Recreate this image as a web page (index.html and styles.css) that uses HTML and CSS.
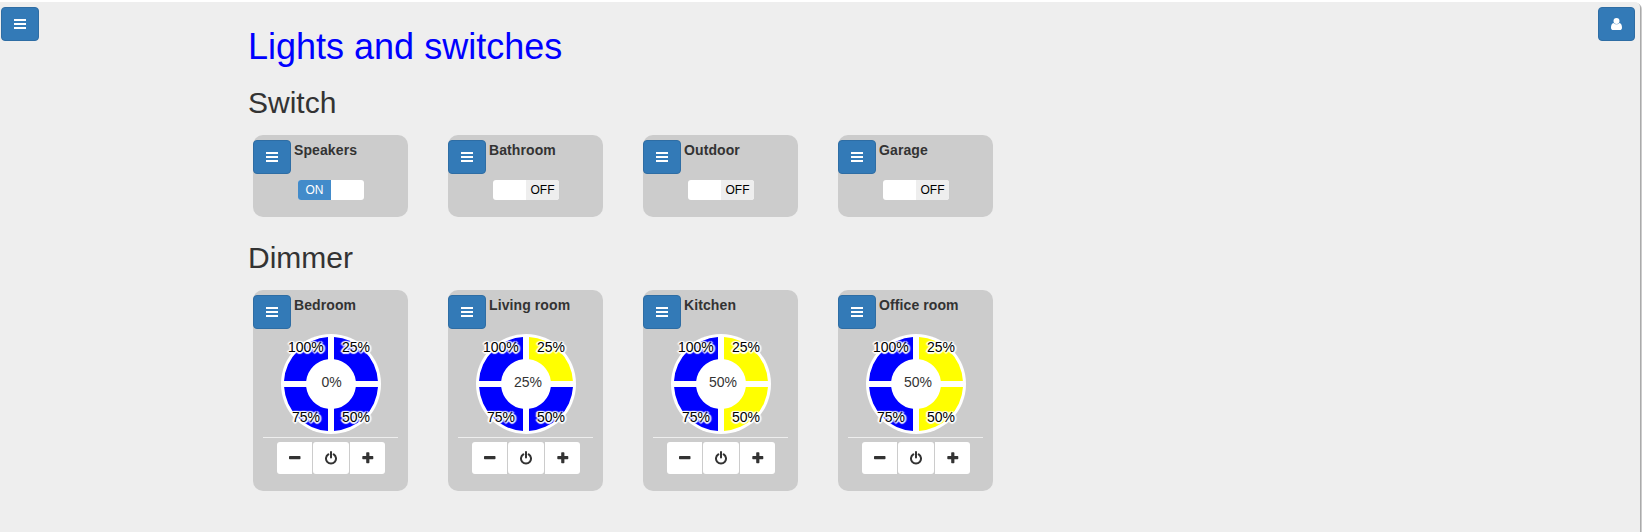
FILE: index.html
```html
<!DOCTYPE html>
<html lang="en">
<head>
<meta charset="utf-8">
<title>Lights and switches</title>
<link rel="stylesheet" href="styles.css">
</head>
<body>
<svg class="defs" aria-hidden="true">
  <symbol id="bars" viewBox="0 0 12 10"><path d="M0 0h12v2H0zM0 4h12v2H0zM0 8h12v2H0z"/></symbol>
  <symbol id="user" viewBox="0 0 11 12"><circle cx="5.5" cy="3" r="3"/><path d="M2.600 5C.8 5.200 0 7.300 0 9.700 0 11.200 1 12 2.300 12h6.400C10 12 11 11.200 11 9.700 11 7.300 10.200 5.200 8.400 5 7.600 5.800 6.600 6.300 5.500 6.300S3.400 5.800 2.600 5z"/></symbol>
  <symbol id="minus" viewBox="0 0 12 12"><rect x="0" y="4" width="11.500" height="3.200" rx=".7"/></symbol>
  <symbol id="plus" viewBox="0 0 12 12"><path d="M4.900.2h1.800q.7 0 .7.700v3.200h3.200q.7 0 .7.700v1.800q0 .7-.7.700H7.400v3.200q0 .7-.7.700H4.900q-.7 0-.7-.7V7.300H1q-.7 0-.7-.7V4.800q0-.7.700-.7h3.200V.9q0-.7.700-.7z"/></symbol>
  <symbol id="power" viewBox="0 0 12 14"><path d="M3.300 3.400a5 5 0 1 0 5.400 0M6 1v5.500" fill="none" stroke="currentColor" stroke-width="2" stroke-linecap="round"/></symbol>
  <symbol id="quarter" viewBox="0 0 44 44"><path d="M0 0A47 47 0 0 1 43.900 44H21.800A25 25 0 0 0 0 22.200z"/></symbol>
</svg>
<div class="page">
  <header class="topbar">
    <button class="btn"><svg class="bars"><use href="#bars"/></svg></button>
    <button class="btn btn-user"><svg class="user"><use href="#user"/></svg></button>
  </header>
  <main class="content">
    <h1>Lights and switches</h1>
    <h2>Switch</h2>
    <div class="row" id="switches"></div>
    <h2 class="next">Dimmer</h2>
    <div class="row" id="dimmers"></div>
  </main>
</div>
<script src="app.js"></script>
</body>
</html>
```
FILE: styles.css
```css
* { box-sizing: border-box; }
body {
  margin: 0;
  height: 532px;
  overflow: hidden;
  padding-top: 2px;
  background: #fff;
  color: #333;
  font: 14px/20px "Liberation Sans", Arial, sans-serif;
}
.defs { display: none; }
svg { display: block; fill: currentColor; }
.page {
  width: 1640px;
  height: 530px;
  background: #eee;
  border-top-right-radius: 5px;
  box-shadow: 1px 1px 0 #aaa, 2px 2px 0 #ccc;
  clip-path: inset(0 -5px 0 0);
}
.topbar {
  display: flex;
  justify-content: space-between;
  height: 39px;
  padding: 5px 5px 0 1px;
}
.btn {
  display: flex;
  align-items: center;
  justify-content: center;
  flex: none;
  width: 38px;
  height: 34px;
  padding: 0;
  border: 1px solid #2e6da4;
  border-radius: 4px;
  background: #337ab7;
  color: #fff;
}
.btn-user { width: 37px; }
.bars { width: 12px; height: 10px; }
.user { width: 11px; height: 12px; }
.content { padding: 0 0 0 248px; margin-top: -14px; }
h1, h2 { margin: 0; font-weight: 400; }
h1 { font-size: 36px; line-height: 40px; color: #00f; }
h2 { font-size: 30px; line-height: 33px; margin-top: 19px; }
h2.next { margin-top: 24px; }
.row { display: flex; gap: 40px; padding-left: 5px; margin-top: 16px; }
.card {
  width: 155px;
  height: 82px;
  border-radius: 10px;
  background: #ccc;
  padding-top: 5px;
}
.card-tall { height: 201px; }
.head { display: flex; height: 34px; gap: 3px; font-weight: 700; letter-spacing: .1px; }
.toggle {
  display: flex;
  width: 66px;
  height: 20px;
  margin: 6px 0 0 45px;
  border-radius: 3px;
  overflow: hidden;
  background: #fff;
  font-size: 12px;
  text-align: center;
}
.toggle span { width: 33px; }
.on { background: #428bca; color: #fff; }
.off { background: #eee; color: #000; margin-left: 33px; }
.dial {
  position: relative;
  display: grid;
  grid-template: 44px 44px / 44px 44px;
  gap: 6px;
  width: 100px;
  height: 100px;
  margin: 5px auto 0 28px;
  padding: 3px;
  border-radius: 50%;
  background: #fff;
  color: #000;
}
.arc { width: 44px; height: 44px; fill: #00f; }
.lit { fill: #ff0; }
.tl { transform: rotate(-90deg); }
.br { transform: rotate(90deg); }
.bl { transform: rotate(180deg); }
.mark {
  position: absolute;
  text-shadow: 1px 1px 1px #fff, -1px 1px 1px #fff, 1px -1px 1px #fff, -1px -1px 1px #fff, 2px 0 1px #fff, -2px 0 1px #fff, 0 2px 1px #fff;
}
.mark-100 { left: 7px; top: 3px; }
.mark-25 { left: 61px; top: 3px; }
.mark-75 { left: 11px; top: 73px; }
.mark-50 { left: 61px; top: 73px; }
.level { position: absolute; left: 38px; top: 38px; width: 25px; text-align: center; color: #333; }
.rule { height: 1px; margin: 3px 10px; background: #eee; }
.group { display: flex; gap: 1px; margin-left: 24px; padding-top: 1px; }
.step {
  display: flex;
  align-items: center;
  justify-content: center;
  width: 35px;
  height: 32px;
  padding: 0;
  border: 0;
  border-radius: 3px 0 0 3px;
  background: #fff;
  color: #333;
}
.step svg { width: 12px; height: 12px; }
.step-power { width: 36px; border-radius: 3px; }
.step-power svg { height: 14px; }
.step:last-child { border-radius: 0 3px 3px 0; }
```
FILE: app.js
```js
const head = name => `<div class="head"><button class="btn"><svg class="bars"><use href="#bars"/></svg></button><span>${name}</span></div>`;
const arc = (pos, lit) => `<svg class="arc ${pos}${lit ? " lit" : ""}"><use href="#quarter"/></svg>`;
const step = (icon, extra = "") => `<button class="step ${extra}"><svg><use href="#${icon}"/></svg></button>`;

document.getElementById("switches").innerHTML =
  [["Speakers", true], ["Bathroom", false], ["Outdoor", false], ["Garage", false]]
    .map(([name, on]) => `<section class="card">${head(name)}
      <div class="toggle">${on ? '<span class="on">ON</span>' : '<span class="off">OFF</span>'}</div></section>`)
    .join("");

document.getElementById("dimmers").innerHTML =
  [["Bedroom", 0], ["Living room", 25], ["Kitchen", 50], ["Office room", 50]]
    .map(([name, level]) => `<section class="card card-tall">${head(name)}
      <div class="dial">
        ${arc("tl", level >= 100)}${arc("tr", level >= 25)}${arc("bl", level >= 75)}${arc("br", level >= 50)}
        <span class="mark mark-100">100%</span><span class="mark mark-25">25%</span>
        <span class="mark mark-75">75%</span><span class="mark mark-50">50%</span>
        <span class="level">${level}%</span>
      </div>
      <div class="rule"></div>
      <div class="group">${step("minus")}${step("power", "step-power")}${step("plus")}</div></section>`)
    .join("");
```
